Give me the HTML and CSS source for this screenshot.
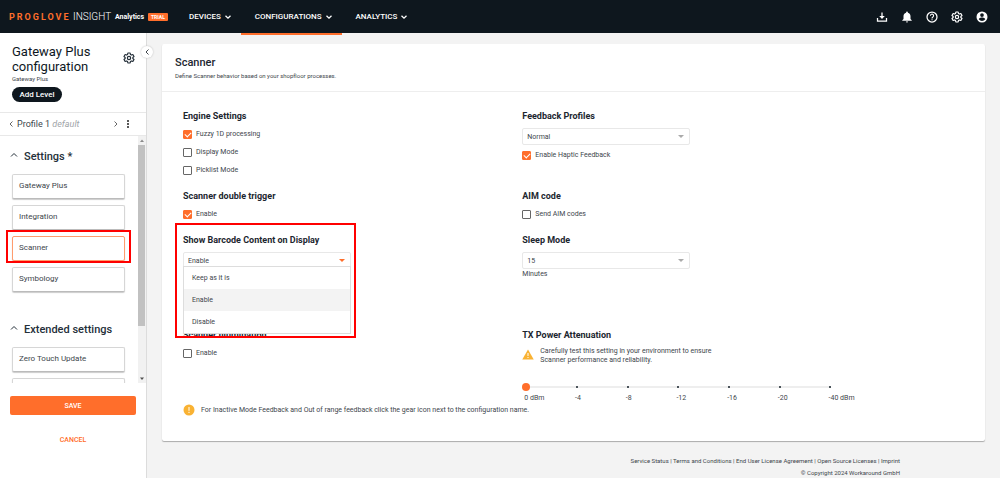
FILE: index.html
```html
<!DOCTYPE html>
<html lang="en">
<head>
<meta charset="utf-8">
<title>ProGlove Insight - Gateway Plus configuration</title>
<link rel="stylesheet" href="styles.css">
</head>
<body>
<svg class="sprite" aria-hidden="true">
  <symbol id="down" viewBox="0 0 8 8"><path d="M1.500 2.800 4 5.200l2.500-2.400" fill="none" stroke="currentColor" stroke-width="1.300"/></symbol>
  <symbol id="up" viewBox="0 0 8 8"><path d="M1 5.500 4 2.500l3 3" fill="none" stroke="currentColor"/></symbol>
  <symbol id="left" viewBox="0 0 8 8"><path d="M5.500 1.500 3 4l2.500 2.500" fill="none" stroke="currentColor"/></symbol>
  <symbol id="right" viewBox="0 0 8 8"><path d="M2.500 1.500 5 4 2.500 6.500" fill="none" stroke="currentColor"/></symbol>
  <symbol id="gear" viewBox="0 0 24 24"><path d="M9.700 2h4.600l.6 3 1.900 1.100 2.900-1 2.300 4-2.300 2v1.800l2.300 2-2.300 4-2.900-1-1.900 1.100-.6 3H9.700l-.6-3-1.900-1.100-2.900 1-2.300-4 2.300-2v-1.800l-2.300-2 2.300-4 2.900 1L9.100 5z" fill="none" stroke="currentColor" stroke-width="2.400" stroke-linejoin="round"/><circle cx="12" cy="12" r="3.300" fill="none" stroke="currentColor" stroke-width="2.400"/></symbol>
</svg>

<header class="topbar">
  <div class="brand">
    <span class="brand-name">PROGLOVE</span>
    <span class="brand-product">INSIGHT</span>
    <span class="brand-plan">Analytics</span>
    <span class="trial">TRIAL</span>
  </div>
  <nav class="nav">
    <button class="tab" type="button">DEVICES <svg class="chev"><use href="#down"/></svg></button>
    <button class="tab tab-active" type="button">CONFIGURATIONS <svg class="chev"><use href="#down"/></svg></button>
    <button class="tab" type="button">ANALYTICS <svg class="chev"><use href="#down"/></svg></button>
  </nav>
  <div class="tools">
    <button class="tool" type="button" aria-label="Downloads"><svg viewBox="0 0 24 24"><path d="M12 3v9M3 14v6h18v-6" fill="none" stroke="currentColor" stroke-width="2.500"/><path d="M6.500 10h11L12 16z" fill="currentColor"/></svg></button>
    <button class="tool" type="button" aria-label="Notifications"><svg viewBox="0 0 24 24"><path d="M12 23a2.300 2.300 0 0 0 2.300-2.200H9.700A2.300 2.300 0 0 0 12 23zm7-7v-5.500c0-3.400-1.900-6.200-5.200-7V2.800a1.800 1.800 0 0 0-3.600 0v.7C6.900 4.300 5 7.100 5 10.500V16l-2.500 2.500v1h19v-1z" fill="currentColor"/></svg></button>
    <button class="tool" type="button" aria-label="Help"><svg viewBox="0 0 24 24"><circle cx="12" cy="12" r="10" fill="none" stroke="currentColor" stroke-width="2.500"/><path d="M8.800 9.500a3.200 3.200 0 1 1 5 2.600c-1.200.8-1.800 1.400-1.800 2.900" fill="none" stroke="currentColor" stroke-width="2.200"/><path d="M11 16.500h2.200v2.200H11z" fill="currentColor"/></svg></button>
    <button class="tool" type="button" aria-label="Settings"><svg><use href="#gear"/></svg></button>
    <button class="tool" type="button" aria-label="Account"><svg viewBox="0 0 24 24"><path fill-rule="evenodd" d="M12 1a11 11 0 1 0 0 22 11 11 0 0 0 0-22zm0 3.500a3.700 3.700 0 1 1 0 7.400 3.700 3.700 0 0 1 0-7.400zM12 20a8 8 0 0 1-6.500-3.500c0-2.200 4.300-3.300 6.500-3.300s6.500 1.100 6.500 3.300A8 8 0 0 1 12 20z" fill="currentColor"/></svg></button>
  </div>
</header>

<div class="layout">
  <aside class="sidebar">
    <button class="collapse" type="button" aria-label="Collapse sidebar"><svg class="chev"><use href="#left"/></svg></button>
    <div class="side-head">
      <div class="side-title">
        <h1>Gateway Plus configuration</h1>
        <p>Gateway Plus</p>
        <button class="add" type="button">Add Level</button>
      </div>
      <button class="gear" type="button" aria-label="Configuration settings"><svg><use href="#gear"/></svg></button>
    </div>
    <div class="profile">
      <button class="icon-btn" type="button" aria-label="Previous profile"><svg class="chev"><use href="#left"/></svg></button>
      <span class="profile-name">Profile 1 <em>default</em></span>
      <button class="icon-btn" type="button" aria-label="Next profile"><svg class="chev"><use href="#right"/></svg></button>
      <button class="icon-btn dots" type="button" aria-label="More"><svg class="chev" viewBox="0 0 8 8"><g fill="currentColor"><circle cx="4" cy="1" r="1"/><circle cx="4" cy="4" r="1"/><circle cx="4" cy="7" r="1"/></g></svg></button>
    </div>
    <div class="scroll">
      <div class="sections">
        <section class="section">
          <h2><svg class="chev"><use href="#up"/></svg>Settings *</h2>
          <button class="item" type="button">Gateway Plus</button>
          <button class="item" type="button">Integration</button>
          <div class="marked"><button class="item item-active" type="button">Scanner</button></div>
          <button class="item" type="button">Symbology</button>
        </section>
        <section class="section">
          <h2><svg class="chev"><use href="#up"/></svg>Extended settings</h2>
          <button class="item" type="button">Zero Touch Update</button>
          <button class="item" type="button" aria-label="More settings"></button>
        </section>
      </div>
      <div class="scrollbar" aria-hidden="true">
        <svg viewBox="0 0 8 8"><path d="M2 5.500h4L4 3z" fill="#8a8a8a"/></svg>
        <div class="thumb"></div>
        <div class="rest"></div>
        <svg viewBox="0 0 8 8"><path d="M2 3h4L4 5.500z" fill="#505050"/></svg>
      </div>
    </div>
    <div class="actions">
      <button class="save" type="button">SAVE</button>
      <button class="cancel" type="button">CANCEL</button>
    </div>
  </aside>

  <main class="main">
    <div class="card">
      <div class="card-head">
        <h2>Scanner</h2>
        <p>Define Scanner behavior based on your shopfloor processes.</p>
      </div>
      <form class="fields">
        <section class="field">
          <h3>Engine Settings</h3>
          <label class="check"><input type="checkbox" checked>Fuzzy 1D processing</label>
          <label class="check"><input type="checkbox">Display Mode</label>
          <label class="check"><input type="checkbox">Picklist Mode</label>
        </section>
        <section class="field">
          <h3><label for="feedback">Feedback Profiles</label></h3>
          <div class="select"><select id="feedback"><option>Normal</option></select></div>
          <label class="check"><input type="checkbox" checked>Enable Haptic Feedback</label>
        </section>
        <section class="field">
          <h3>Scanner double trigger</h3>
          <label class="check"><input type="checkbox" checked>Enable</label>
        </section>
        <section class="field">
          <h3>AIM code</h3>
          <label class="check"><input type="checkbox">Send AIM codes</label>
        </section>
        <section class="field field-tall">
          <h3><label for="barcode">Show Barcode Content on Display</label></h3>
          <div class="select select-open">
            <select id="barcode"><option>Enable</option></select>
            <div class="menu" role="listbox" aria-label="Show Barcode Content on Display">
              <button type="button" role="option" aria-selected="false">Keep as it is</button>
              <button type="button" role="option" aria-selected="true">Enable</button>
              <button type="button" role="option" aria-selected="false">Disable</button>
            </div>
          </div>
          <div class="frame"></div>
        </section>
        <section class="field field-tall">
          <h3><label for="sleep">Sleep Mode</label></h3>
          <div class="select"><select id="sleep"><option>15</option></select></div>
          <p class="unit">Minutes</p>
        </section>
        <section class="field">
          <h3>Scanner Illumination</h3>
          <label class="check"><input type="checkbox">Enable</label>
        </section>
        <section class="field">
          <h3><label for="power">TX Power Attenuation</label></h3>
          <div class="warning">
            <svg viewBox="0 0 24 22"><path d="M12 1 23.500 21H.5z" fill="#f9b233"/><path d="M12 8v6M12 16v2" stroke="#fff" stroke-width="2"/></svg>
            <p>Carefully test this setting in your environment to ensure Scanner performance and reliability.</p>
          </div>
          <div class="slider">
            <div class="ticks"><i></i><i></i><i></i><i></i><i></i><i></i><i></i></div>
            <input id="power" type="range" min="0" max="6" value="0">
          </div>
          <div class="scale"><span>0 dBm</span><span>-4</span><span>-8</span><span>-12</span><span>-16</span><span>-20</span><span>-40 dBm</span></div>
        </section>
      </form>
      <div class="note">
        <svg viewBox="0 0 12 12"><circle cx="6" cy="6" r="5.500" fill="#f9b233"/><path d="M6 3v3.800M6 7.800v1.200" stroke="#fff"/></svg>
        <p>For Inactive Mode Feedback and Out of range feedback click the gear icon next to the configuration name.</p>
      </div>
    </div>
    <footer class="footer">
      <p><a href="#">Service Status</a> | <a href="#">Terms and Conditions</a> | <a href="#">End User License Agreement</a> | <a href="#">Open Source Licenses</a> | <a href="#">Imprint</a></p>
      <p>© Copyright 2024 Workaround GmbH</p>
    </footer>
  </main>
</div>
</body>
</html>
```
FILE: styles.css
```css
* { box-sizing: border-box; }
body {
  margin: 0;
  height: 100vh;
  display: flex;
  flex-direction: column;
  overflow: hidden;
  background: #f3f3f3;
  color: #40464c;
  font: 8px/12px Roboto, "Liberation Sans", sans-serif;
}
h1, h2, h3, p { margin: 0; font-weight: 400; }
button { padding: 0; border: 0; background: none; color: inherit; font: inherit; cursor: pointer; }
a { color: inherit; text-decoration: none; }
svg { display: block; flex: none; }
.sprite { position: absolute; width: 0; height: 0; }
.chev { width: 8px; height: 8px; }

/* Top bar */
.topbar {
  position: relative;
  z-index: 3;
  display: flex;
  flex: none;
  height: 33px;
  padding: 0 12px 0 9px;
  background: #0e171e;
  color: #fff;
}
.brand { display: flex; align-items: center; width: 166px; white-space: nowrap; }
.brand-name { width: 64px; color: #ff6e2b; font-size: 9px; font-weight: 700; letter-spacing: 2px; }
.brand-product { width: 42px; font-size: 10px; font-weight: 300; }
.brand-plan { width: 33px; font-size: 7px; font-weight: 700; }
.trial { padding: 0 3px; border-radius: 1px; background: #ff6e2b; font-size: 5px; font-weight: 700; line-height: 8px; }
.nav { display: flex; flex: 1; }
.tab {
  display: flex;
  align-items: center;
  gap: 3px;
  height: 35px;
  padding: 0 9px 0 14px;
  border-bottom: 2px solid transparent;
  font-size: 8px;
  font-weight: 500;
}
.tab-active { border-bottom-color: #ff6e2b; }
.tools { display: flex; align-items: center; gap: 13px; }
.tool svg { width: 12px; height: 12px; }

/* Sidebar */
.layout { display: flex; flex: 1; min-height: 0; }
.sidebar {
  position: relative;
  display: flex;
  flex: none;
  flex-direction: column;
  width: 147px;
  border-right: 1px solid #dcdcdc;
  background: #fff;
}
.collapse {
  position: absolute;
  top: 13px;
  right: -7px;
  display: grid;
  place-items: center;
  width: 12px;
  height: 12px;
  border-radius: 50%;
  background: #fff;
  box-shadow: 0 0 2px #bbb;
}
.side-head { display: flex; justify-content: space-between; padding: 11px 11px 10px 12px; }
.side-title { width: 96px; }
.side-title h1 { color: #0e171e; font-size: 13px; line-height: 15px; }
.side-title p { font-size: 6px; line-height: 9px; }
.add {
  width: 50px;
  height: 15px;
  margin-top: 4px;
  border-radius: 8px;
  background: #0e171e;
  color: #fff;
  font-weight: 500;
}
.gear { align-self: flex-start; margin-top: 8px; color: #25303a; }
.gear svg { width: 12px; height: 12px; }
.profile {
  display: flex;
  align-items: center;
  height: 24px;
  padding: 0 14px 0 7px;
  border-top: 1px solid #e8e8e8;
  border-bottom: 1px solid #e8e8e8;
}
.icon-btn { color: #666; }
.profile-name { flex: 1; padding-left: 2px; font-size: 9px; }
.profile-name em { color: #a0a4a8; }
.dots { margin-left: 4px; color: #222; }
.scroll { display: flex; flex: 1; min-height: 0; overflow: hidden; }
.sections { flex: 1; padding: 13px 13px 0 12px; }
.section { display: flex; flex-direction: column; gap: 6px; margin-bottom: 30px; }
.section h2 { display: flex; gap: 6px; height: 19px; color: #25303a; font-size: 11px; font-weight: 500; line-height: 16px; }
.section h2 .chev { margin: 2px 0 0 -2px; }
.item {
  flex: none;
  width: 100%;
  height: 25px;
  padding: 0 6px 2px;
  border: 1px solid #d6d6d6;
  border-bottom-color: #bbb;
  border-radius: 2px;
  background: #fff;
  box-shadow: 0 1px 1px #ccc;
  text-align: left;
}
.item-active { border-color: #ff9c6e; }
.marked { position: relative; height: 25px; }
.marked::after { content: ""; position: absolute; inset: -6px -6px -2px; border: 2px solid #f00; }
.scrollbar { display: flex; flex-direction: column; width: 8px; background: #f1f1f1; }
.scrollbar svg { width: 8px; height: 9px; }
.thumb { flex: 79; margin: 0 1px 0 0; background: #c1c1c1; }
.rest { flex: 21; }
.actions { display: flex; flex-direction: column; gap: 16px; padding: 13px 10px 29px; }
.save { height: 19px; border-radius: 2px; background: #ff6e2b; color: #fff; font-size: 7px; font-weight: 500; }
.cancel { height: 18px; color: #ff6e2b; font-size: 7px; font-weight: 500; }

/* Card */
.main { flex: 1; padding: 11px 15px 0; }
.card {
  border-radius: 2px;
  background: #fff;
  box-shadow: 0 1px 1px #aaa;
  font-size: 7px;
}
.card-head { height: 48px; padding: 12px 13px 0; border-bottom: 1px solid #eee; }
.card-head h2 { color: #1c262f; font-size: 11px; font-weight: 500; line-height: 14px; }
.card-head p { font-size: 6px; line-height: 12px; }
.fields {
  display: grid;
  grid-template-columns: 11fr 15fr;
  row-gap: 10px;
  padding: 17px 0 0 21px;
}
.field { position: relative; }
.field-tall { min-height: 85px; }
.field h3 { margin-bottom: 2px; color: #1c262f; font-size: 9px; font-weight: 700; line-height: 14px; }
.check { display: flex; align-items: center; gap: 4px; height: 18px; }
.check input {
  appearance: none;
  display: grid;
  place-items: center;
  width: 9px;
  height: 9px;
  margin: 0;
  border: 1px solid #666;
  border-radius: 1px;
}
.check input:checked { border-color: #ff6e2b; background: #ff6e2b; }
.check input:checked::before {
  content: "";
  width: 5px;
  height: 3px;
  border: solid #fff;
  border-width: 0 0 1px 1px;
  transform: rotate(-45deg);
}
.select { position: relative; width: 168px; margin-top: 5px; margin-bottom: 1px; }
.select select {
  appearance: none;
  display: block;
  width: 100%;
  height: 17px;
  padding: 0 4px;
  border: 1px solid #e8e8e8;
  border-radius: 2px;
  background: #fff;
  color: inherit;
  font: inherit;
}
.select::after {
  content: "";
  position: absolute;
  top: 7px;
  right: 6px;
  border: 3px solid transparent;
  border-top-color: #aaa;
  border-bottom: 0;
}
.select-open::after { border-top-color: #ff6e2b; }
.menu {
  position: absolute;
  z-index: 1;
  top: 14px;
  left: 0;
  width: 100%;
  border: 1px solid #ddd;
  background: #fff;
}
.menu button { display: block; width: 100%; height: 22px; padding: 0 8px; text-align: left; }
.menu button[aria-selected="true"] { background: #f3f3f3; }
.frame { position: absolute; z-index: 2; top: -10px; left: -8px; width: 181px; height: 115px; border: 2px solid #f00; }
.unit { line-height: 9px; }
.warning { display: flex; gap: 6px; width: 206px; margin-top: 5px; }
.warning svg { width: 12px; height: 11px; margin-top: 2px; }
.warning p { line-height: 9px; }
.slider { position: relative; width: 312px; margin-top: 17px; }
.slider input { appearance: none; position: relative; display: block; width: 100%; height: 10px; margin: 0; background: none; }
.slider input::-webkit-slider-thumb { appearance: none; width: 8px; height: 8px; border-radius: 50%; background: #ff6e2b; }
.ticks {
  position: absolute;
  inset: 4px 3px auto;
  display: flex;
  justify-content: space-between;
  height: 2px;
  background: #eee;
}
.ticks i { width: 2px; height: 2px; border-radius: 1px; background: #14202a; }
.scale { display: grid; grid-template-columns: repeat(7, 1fr); width: 357px; padding-left: 2px; white-space: nowrap; }
.note { display: flex; align-items: center; gap: 6px; padding: 0 21px 25px; }
.note svg { width: 12px; height: 12px; }

.footer { padding: 14px 85px 0 0; text-align: right; font-size: 6px; }
```
